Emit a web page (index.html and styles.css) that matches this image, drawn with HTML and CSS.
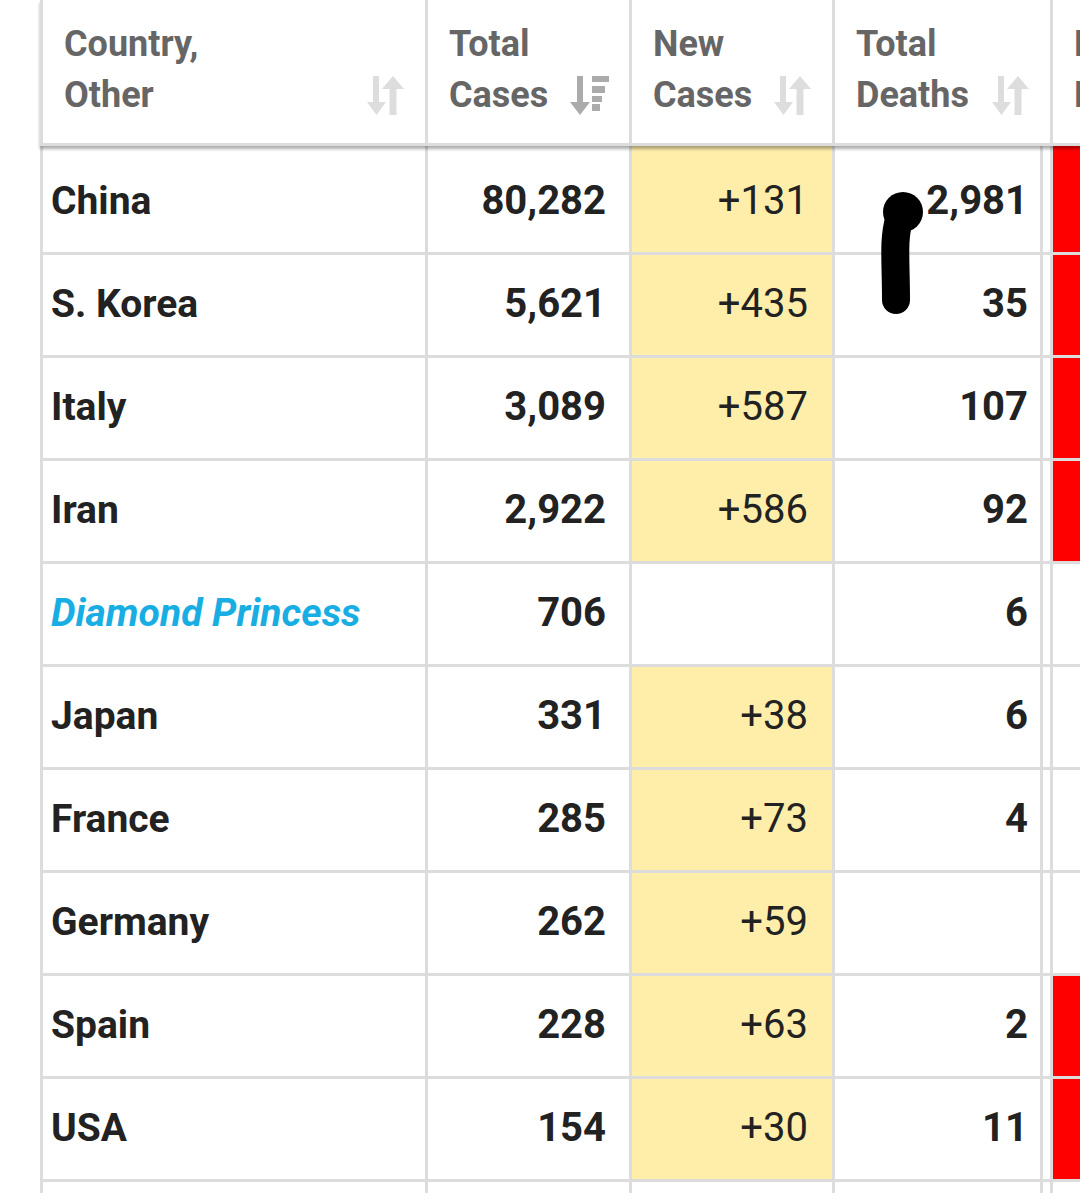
FILE: index.html
```html
<!DOCTYPE html>
<html lang="en">
<head>
<meta charset="utf-8">
<title>Coronavirus cases by country</title>
<link rel="stylesheet" href="styles.css">
</head>
<body>
<div class="page">
  <div class="table">
    <div class="thead">
      <div class="th">
        <div class="label">Country,<br>Other</div>
        <svg class="sort" viewBox="0 0 38 39" width="38" height="39"><path d="M6 0h6v26h7l-9.5 13L0 26h6z"/><path d="M26 0l11 13h-7.5v26h-7V13H15z"/></svg>
      </div>
      <div class="th">
        <div class="label">Total<br>Cases</div>
        <svg class="sort active" viewBox="0 0 39 39" width="39" height="39"><path d="M7 0h6v26h7l-10 13L0 26h7z"/><rect x="22" y="0" width="17" height="6"/><rect x="22" y="10" width="13" height="7"/><rect x="22" y="20" width="10" height="6"/><rect x="22" y="28" width="8" height="7"/></svg>
      </div>
      <div class="th">
        <div class="label">New<br>Cases</div>
        <svg class="sort" viewBox="0 0 38 39" width="38" height="39"><path d="M6 0h6v26h7l-9.5 13L0 26h6z"/><path d="M26 0l11 13h-7.5v26h-7V13H15z"/></svg>
      </div>
      <div class="th">
        <div class="label">Total<br>Deaths</div>
        <svg class="sort" viewBox="0 0 38 39" width="38" height="39"><path d="M6 0h6v26h7l-9.5 13L0 26h6z"/><path d="M26 0l11 13h-7.5v26h-7V13H15z"/></svg>
      </div>
      <div class="th clip">
        <div class="label">New<br>Deaths</div>
      </div>
    </div>

    <div class="tbody">
      <div class="row">
        <div class="td name">China</div><div class="td num">80,282</div><div class="td new yellow">+131</div><div class="td num deaths">2,981</div><div class="td gap"></div><div class="td red"></div>
      </div>
      <div class="row">
        <div class="td name">S. Korea</div><div class="td num">5,621</div><div class="td new yellow">+435</div><div class="td num deaths">35</div><div class="td gap"></div><div class="td red"></div>
      </div>
      <div class="row">
        <div class="td name">Italy</div><div class="td num">3,089</div><div class="td new yellow">+587</div><div class="td num deaths">107</div><div class="td gap"></div><div class="td red"></div>
      </div>
      <div class="row">
        <div class="td name">Iran</div><div class="td num">2,922</div><div class="td new yellow">+586</div><div class="td num deaths">92</div><div class="td gap"></div><div class="td red"></div>
      </div>
      <div class="row">
        <div class="td name ship">Diamond Princess</div><div class="td num">706</div><div class="td new"></div><div class="td num deaths">6</div><div class="td gap"></div><div class="td"></div>
      </div>
      <div class="row">
        <div class="td name">Japan</div><div class="td num">331</div><div class="td new yellow">+38</div><div class="td num deaths">6</div><div class="td gap"></div><div class="td"></div>
      </div>
      <div class="row">
        <div class="td name">France</div><div class="td num">285</div><div class="td new yellow">+73</div><div class="td num deaths">4</div><div class="td gap"></div><div class="td"></div>
      </div>
      <div class="row">
        <div class="td name">Germany</div><div class="td num">262</div><div class="td new yellow">+59</div><div class="td num deaths"></div><div class="td gap"></div><div class="td"></div>
      </div>
      <div class="row">
        <div class="td name">Spain</div><div class="td num">228</div><div class="td new yellow">+63</div><div class="td num deaths">2</div><div class="td gap"></div><div class="td red"></div>
      </div>
      <div class="row">
        <div class="td name">USA</div><div class="td num">154</div><div class="td new yellow">+30</div><div class="td num deaths">11</div><div class="td gap"></div><div class="td red"></div>
      </div>
      <div class="row">
        <div class="td name"></div><div class="td num"></div><div class="td new"></div><div class="td num deaths"></div><div class="td gap"></div><div class="td"></div>
      </div>
    </div>
  </div>

  <svg class="scribble" width="1080" height="1193" viewBox="0 0 1080 1193">
    <ellipse cx="903" cy="212" rx="20" ry="20"/>
    <path d="M899 220 C893 240 896 262 896 300" fill="none" stroke="#000" stroke-width="28" stroke-linecap="round"/>
  </svg>
</div>
</body>
</html>
```

FILE: styles.css
```css
html, body {
  margin: 0;
  padding: 0;
  background: #fff;
}

body {
  width: 1080px;
  height: 1193px;
  overflow: hidden;
  font-family: Roboto, "Liberation Sans", sans-serif;
}

.page {
  position: relative;
  width: 1080px;
  height: 1193px;
  overflow: hidden;
}

.table {
  margin-left: 40px;
  width: 1040px;
}

.thead {
  position: relative;
  z-index: 2;
  display: grid;
  grid-template-columns: 385px 204px 203px 218px 30px;
  background: #fff;
  box-shadow: 0 3px 3px rgba(0, 0, 0, 0.32);
}

.th {
  box-sizing: border-box;
  height: 146px;
  display: flex;
  justify-content: space-between;
  align-items: flex-end;
  padding: 19px 20px 22px 21px;
  border-left: 3px solid #dcdcdc;
  border-bottom: 3px solid #dcdcdc;
  color: #666;
  font-size: 36px;
  font-weight: 700;
  line-height: 51px;
  background: #fff;
}

.th .label {
  white-space: nowrap;
}

.th.clip {
  overflow: hidden;
  padding-right: 0;
}

.sort {
  flex: none;
  margin-bottom: 6px;
  fill: #dddddd;
}

.sort.active {
  fill: #ababab;
}

.tbody {
  position: relative;
  z-index: 1;
}

.row {
  display: grid;
  grid-template-columns: 385px 204px 203px 208px 10px 30px;
}

.td {
  box-sizing: border-box;
  height: 103px;
  display: flex;
  align-items: center;
  padding-bottom: 3px;
  border-left: 3px solid #dcdcdc;
  border-bottom: 3px solid #dcdcdc;
  font-size: 40px;
  font-weight: 700;
  color: #222;
  white-space: nowrap;
}

.row:first-child .td {
  height: 109px;
  padding-top: 6px;
}

.name {
  padding-left: 8px;
  font-size: 39px;
}

.ship {
  color: #19aee3;
  font-style: italic;
}

.num {
  justify-content: flex-end;
  padding-right: 23px;
}

.num.deaths {
  padding-right: 12px;
}

.new {
  justify-content: flex-end;
  padding-right: 24px;
  font-weight: 400;
}

.yellow {
  background: #ffeeaa;
}

.red {
  background: #ff0000;
}

.scribble {
  position: absolute;
  left: 0;
  top: 0;
  z-index: 5;
  pointer-events: none;
}
```
